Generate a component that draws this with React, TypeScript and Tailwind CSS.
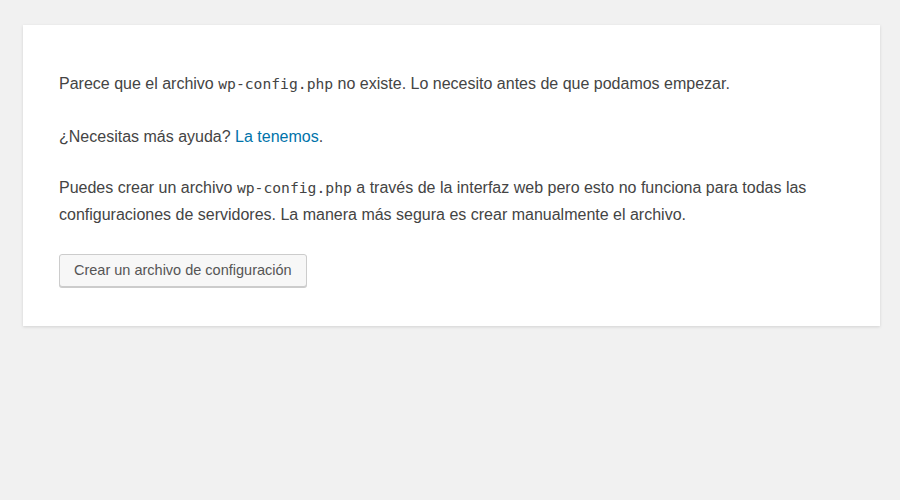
export default function App() {
  const code = "font-['DejaVu_Sans_Mono',monospace] text-[14.7px] leading-none"
  return (
    <div className="min-h-[500px] w-[900px] bg-[#f1f1f1] pt-[25px] font-['Liberation_Sans',Arial,sans-serif] text-[16px] leading-[27px] text-[#444]">
      <div className="ml-[23px] w-[857px] bg-white px-[36px] pt-[45px] pb-[39px] shadow-[0_1px_3px_rgba(0,0,0,0.13)]">
        <p>
          Parece que el archivo <code className={code}>wp-config.php</code> no existe. Lo necesito antes de que podamos empezar.
        </p>
        <p className="mt-[26px]">
          ¿Necesitas más ayuda? <a href="#" className="text-[#0073aa]">La tenemos</a>.
        </p>
        <p className="mt-[24px]">
          Puedes crear un archivo <code className={code}>wp-config.php</code> a través de la interfaz web pero esto no funciona para todas las configuraciones de servidores. La manera más segura es crear manualmente el archivo.
        </p>
        <button
          type="button"
          className="mt-[26px] block h-[33px] rounded-[3px] border border-[#cccccc] bg-[#f7f7f7] px-[14px] text-[14.5px] leading-[31px] text-[#555] shadow-[0_1px_0_#cccccc]"
        >
          Crear un archivo de configuración
        </button>
      </div>
    </div>
  )
}
